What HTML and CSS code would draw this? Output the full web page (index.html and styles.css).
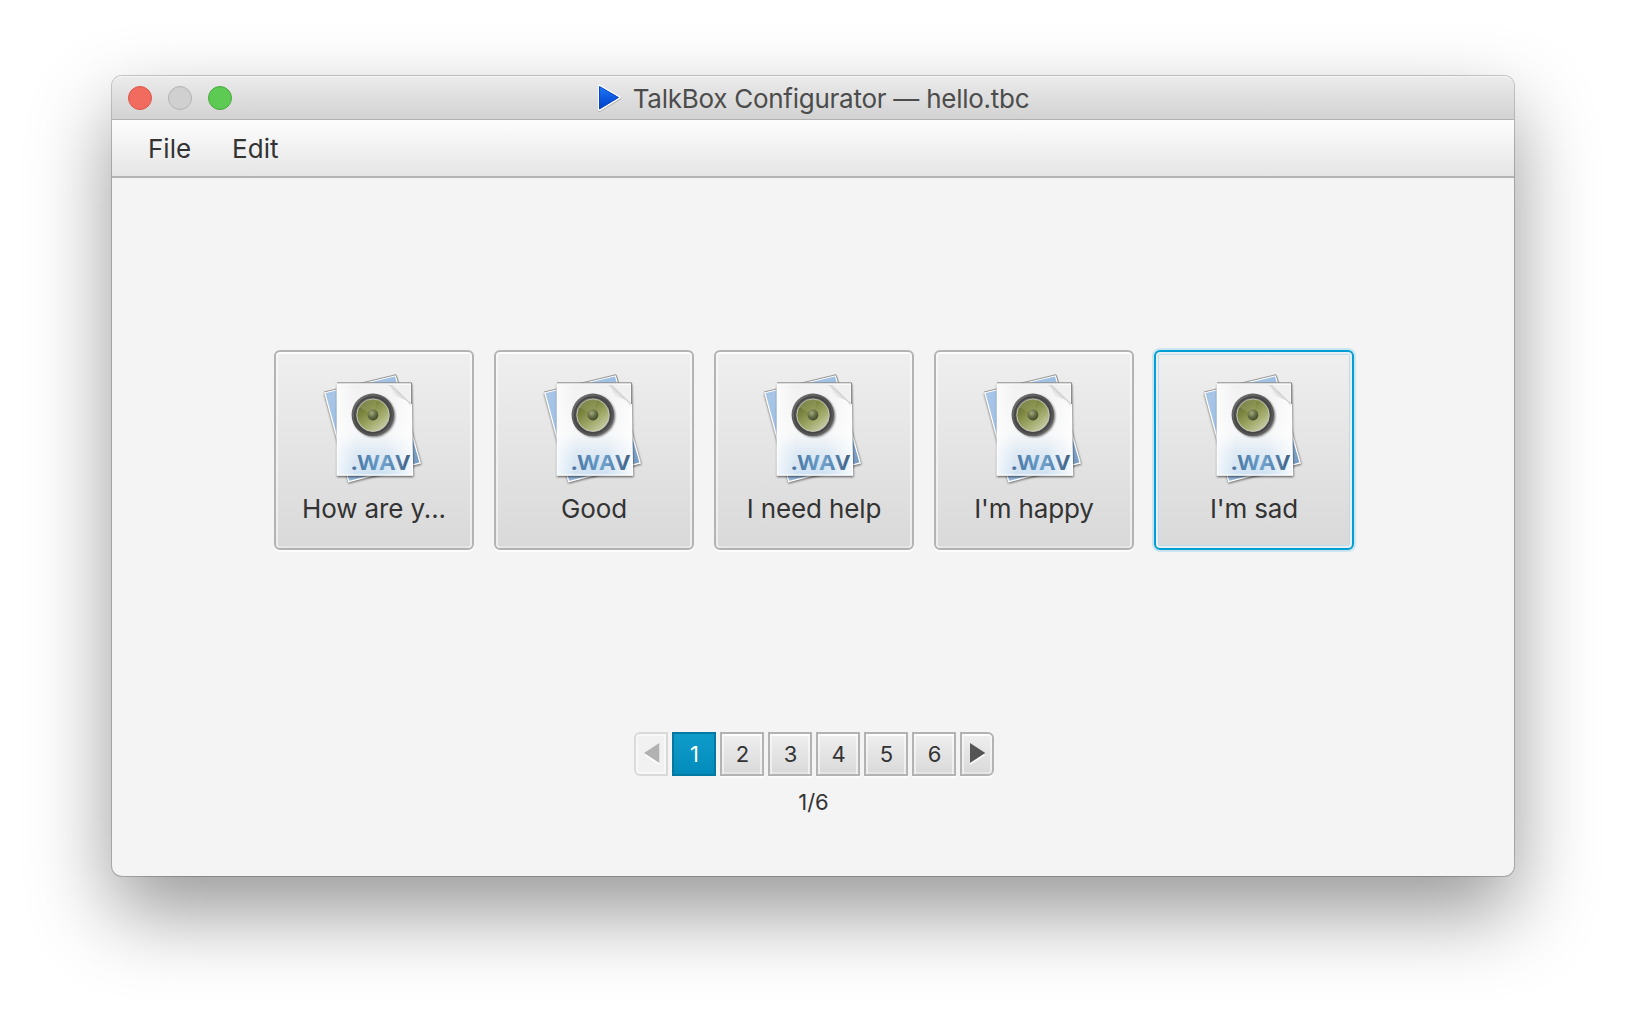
FILE: index.html
```html
<!DOCTYPE html>
<html lang="en">
<head>
<meta charset="utf-8">
<title>TalkBox Configurator — hello.tbc</title>
<link rel="stylesheet" href="styles.css">
</head>
<body>
<svg class="defs" width="0" height="0" aria-hidden="true">
  <defs>
    <linearGradient id="back" x1="0" y1="0" x2="1" y2="1"><stop offset="0" stop-color="#a9c6e8"/><stop offset=".5" stop-color="#9cbfe2"/><stop offset="1" stop-color="#6f93bb"/></linearGradient>
    <linearGradient id="page" x1="0" y1="0" x2="0" y2="1"><stop offset="0" stop-color="#f1f1f1"/><stop offset=".55" stop-color="#f6f7f8"/><stop offset=".75" stop-color="#dfeaf4"/><stop offset="1" stop-color="#cfe2f2"/></linearGradient>
    <linearGradient id="gloss" x1="0" y1="0" x2="1" y2="0"><stop offset="0" stop-color="#fff" stop-opacity=".7"/><stop offset=".25" stop-color="#fff" stop-opacity="0"/><stop offset=".65" stop-color="#fff" stop-opacity="0"/><stop offset="1" stop-color="#fff" stop-opacity=".8"/></linearGradient>
    <linearGradient id="fold" gradientUnits="userSpaceOnUse" x1="74" y1="29" x2="83" y2="20"><stop offset="0" stop-color="#f4f4f4" stop-opacity="0"/><stop offset=".8" stop-color="#bdbdbd"/><stop offset="1" stop-color="#b0b0b0"/></linearGradient>
    <linearGradient id="ring" x1="0" y1="0" x2="1" y2="1"><stop offset="0" stop-color="#777"/><stop offset=".5" stop-color="#505050"/><stop offset="1" stop-color="#626262"/></linearGradient>
    <linearGradient id="cone" x1=".1" y1="0" x2=".9" y2="1"><stop offset="0" stop-color="#5d6534"/><stop offset=".3" stop-color="#7c853f"/><stop offset=".6" stop-color="#a0a868"/><stop offset="1" stop-color="#d2d6b4"/></linearGradient>
    <radialGradient id="cap" cx=".38" cy=".32" r=".7"><stop offset="0" stop-color="#a3ab7c"/><stop offset=".5" stop-color="#69724a"/><stop offset="1" stop-color="#3f4628"/></radialGradient>
    <linearGradient id="wav" gradientUnits="userSpaceOnUse" x1="31" y1="0" x2="90" y2="0"><stop offset="0" stop-color="#4a7199"/><stop offset=".25" stop-color="#5486b4"/><stop offset=".55" stop-color="#6ea0cc"/><stop offset=".8" stop-color="#527da6"/><stop offset="1" stop-color="#40607f"/></linearGradient>
    <linearGradient id="play" x1="0" y1="0" x2="0" y2="1"><stop offset="0" stop-color="#1b78f6"/><stop offset="1" stop-color="#003dc8"/></linearGradient>
    <filter id="soft" x="-20%" y="-20%" width="140%" height="140%"><feGaussianBlur stdDeviation="1"/></filter>
    <symbol id="wavfile" viewBox="0 0 108 120">
      <path d="M4 23.500 76 6 101.500 94.500 28.500 113.500Z" fill="#000" opacity=".55" filter="url(#soft)"/>
      <path d="M4.800 22.700 75.500 5.700 100.200 93 28.700 111.700Z" fill="url(#back)" stroke="#fff" stroke-width="1.300"/>
      <path d="M4 22 76 4.700 81 20" fill="none" stroke="#858585" stroke-width=".8"/>
      <path d="M17 14H92L93.500 107H17Z" fill="#000" opacity=".6" filter="url(#soft)"/>
      <path d="M17.200 13.500H91L92.500 105.200H17.200Z" fill="url(#page)"/>
      <path d="M17.200 13.500H91L92.500 105.200H17.200Z" fill="url(#gloss)" stroke="#fff" stroke-width="1.300"/>
      <path d="M66 15C74 16 72 23 75 27C81 28 87 29 90.500 36V32L73 15Z" fill="url(#fold)"/>
      <path d="M72 15 90.500 33V15Z" fill="#f0f0f0"/>
      <path d="M17 12.800H91.500V34" fill="none" stroke="#808080" stroke-width=".9"/>
      <circle cx="54.200" cy="46" r="21" fill="#000" opacity=".55" filter="url(#soft)"/>
      <circle cx="52.800" cy="44.800" r="21.200" fill="url(#ring)"/>
      <circle cx="52.800" cy="45" r="18" fill="none" stroke="#454545" stroke-width="1.500"/>
      <circle cx="53" cy="45.200" r="16.200" fill="url(#cone)" stroke="#c9ccc0" stroke-width=".9"/>
      <path d="M53 45 39 37A16 16 0 0 1 57 30Z" fill="#a5ad73" opacity=".35"/>
      <circle cx="52.900" cy="45" r="5.400" fill="url(#cap)"/>
      <text x="31" y="100.400" textLength="59" lengthAdjust="spacingAndGlyphs" class="ext" fill="url(#wav)">.WAV</text>
    </symbol>
  </defs>
</svg>
<main class="window">
  <header class="titlebar">
    <div class="lights"><i class="light red"></i><i class="light gray"></i><i class="light green"></i></div>
    <div class="title">
      <svg class="play" width="24" height="28" viewBox="0 0 24 28"><path d="M2.500 2.500V26.500L22.500 14.500Z" fill="none" stroke="#9a9a9a" stroke-width="3" stroke-linejoin="round" opacity=".6"/><path d="M2.500 2V25.500L22 13.500Z" fill="none" stroke="#fff" stroke-width="3" stroke-linejoin="round"/><path d="M2.500 2.500V25L21.500 13.500Z" fill="url(#play)" stroke="#0a45c4" stroke-width="1" stroke-linejoin="round"/></svg>
      <span class="title-text">TalkBox Configurator — hello.tbc</span>
    </div>
  </header>
  <nav class="menubar"><span>File</span><span>Edit</span></nav>
  <section class="content">
    <div class="cards">
      <button class="card"><svg class="icon"><use href="#wavfile"/></svg><span>How are y...</span></button>
      <button class="card"><svg class="icon"><use href="#wavfile"/></svg><span>Good</span></button>
      <button class="card"><svg class="icon"><use href="#wavfile"/></svg><span>I need help</span></button>
      <button class="card"><svg class="icon"><use href="#wavfile"/></svg><span>I'm happy</span></button>
      <button class="card focused"><svg class="icon"><use href="#wavfile"/></svg><span>I'm sad</span></button>
    </div>
    <div class="pager">
      <button class="page arrow prev"><svg width="16" height="22" viewBox="0 0 16 22"><path d="M15.300 2V22L0 12Z" fill="#fff"/><path d="M15.300 0V20L0 10Z" fill="#b2b2b2"/></svg></button>
      <button class="page current">1</button>
      <button class="page">2</button>
      <button class="page">3</button>
      <button class="page">4</button>
      <button class="page">5</button>
      <button class="page">6</button>
      <button class="page arrow next"><svg width="16" height="22" viewBox="0 0 16 22"><path d="M0 2V22L15.300 12Z" fill="#fff"/><path d="M0 0V20L15.300 10Z" fill="#555"/></svg></button>
    </div>
    <div class="count">1/6</div>
  </section>
</main>
</body>
</html>
```
FILE: styles.css
```css
* { box-sizing: border-box; }
body {
  margin: 0;
  height: 1024px;
  padding: 76px 112px 148px;
  background: #fff;
  overflow: hidden;
  font-family: Inter, "Liberation Sans", sans-serif;
  color: #333;
}
.defs { display: block; width: 0; height: 0; position: absolute; }
.window {
  width: 1402px;
  height: 800px;
  display: flex;
  flex-direction: column;
  border-radius: 10px;
  background: #f4f4f4;
  box-shadow: 0 0 0 1px rgba(0, 0, 0, .2), 0 36px 82px rgba(0, 0, 0, .41);
}
.titlebar {
  height: 44px;
  flex: none;
  display: grid;
  grid-template-columns: 120px 1fr 120px;
  align-items: center;
  border-radius: 10px 10px 0 0;
  border-top: 1px solid #f5f5f5;
  border-bottom: 1px solid #b1b1b1;
  background: linear-gradient(#ebebeb, #d2d2d2);
}
.lights { display: flex; gap: 16px; padding-left: 16px; }
.light { width: 24px; height: 24px; border-radius: 50%; border: 1px solid; }
.red { background: #f16b5f; border-color: #d9574c; }
.gray { background: #d0d0d0; border-color: #b3b3b3; }
.green { background: #5dca54; border-color: #4aa93c; }
.title { display: flex; justify-content: center; align-items: center; gap: 12px; font-size: 26px; line-height: 32px; letter-spacing: -.26px; color: #4c4c4c; white-space: nowrap; }
.title-text { padding-top: 2px; }
.play { flex: none; }
.menubar {
  height: 58px;
  flex: none;
  display: flex;
  gap: 41px;
  padding: 13px 0 0 36px;
  border-bottom: 2px solid #b3b3b3;
  background: linear-gradient(#fdfdfd, #e5e5e5);
  font-size: 26px;
  line-height: 32px;
}
.content { flex: 1; display: flex; flex-direction: column; align-items: center; padding-top: 172px; }
.cards { display: flex; gap: 20px; padding-left: 2px; }
button { font: inherit; color: inherit; padding: 0; margin: 0; }
.card {
  width: 200px;
  height: 200px;
  display: flex;
  flex-direction: column;
  align-items: center;
  gap: 3px;
  padding-top: 18px;
  border: 2px solid #b3b3b3;
  border-radius: 6px;
  background: linear-gradient(#efefef, #d9d9d9) padding-box;
  box-shadow: 0 2px 0 #fcfcfc, inset 0 2px 0 #fdfdfd, inset 2px 0 0 rgba(255, 255, 255, .5), inset -2px 0 0 rgba(255, 255, 255, .5), inset 0 -2px 0 rgba(255, 255, 255, .3);
  font-size: 26px;
  line-height: 32px;
  letter-spacing: -.13px;
  white-space: nowrap;
}
.focused {
  border-color: #039ed3;
  box-shadow: 0 0 0 2px #cbe6f0, inset 0 0 0 2px #e9eef0, inset 0 0 0 3px #bfdde8;
}
.icon { width: 108px; height: 120px; flex: none; }
.ext { font: bold 22px "Open Sans", sans-serif; letter-spacing: 0; }
.pager { display: flex; gap: 4px; margin-top: 182px; padding-left: 2px; }
.page {
  width: 44px;
  height: 44px;
  display: flex;
  align-items: center;
  justify-content: center;
  padding-left: 1px;
  border: 2px solid #b3b3b3;
  background: linear-gradient(#efefef, #d9d9d9) padding-box;
  box-shadow: 0 2px 0 #fcfcfc, inset 0 2px 0 #fdfdfd, inset 2px 0 0 rgba(255, 255, 255, .5), inset -2px 0 0 rgba(255, 255, 255, .5), inset 0 -2px 0 rgba(255, 255, 255, .3);
  font-size: 22px;
  line-height: 28px;
}
.current { color: #fff; border-color: #0179a3; background: linear-gradient(#0f9bca, #038cbb); box-shadow: none; }
.arrow { width: 34px; padding-left: 2px; }
.prev { border-color: #dadada; border-radius: 6px 0 0 6px; background: #f1f1f1; box-shadow: inset 0 0 0 2px #f7f7f7; }
.next { border-radius: 0 6px 6px 0; }
.count { margin-top: 12px; padding-left: 1px; font-size: 22px; line-height: 28px; }
```
